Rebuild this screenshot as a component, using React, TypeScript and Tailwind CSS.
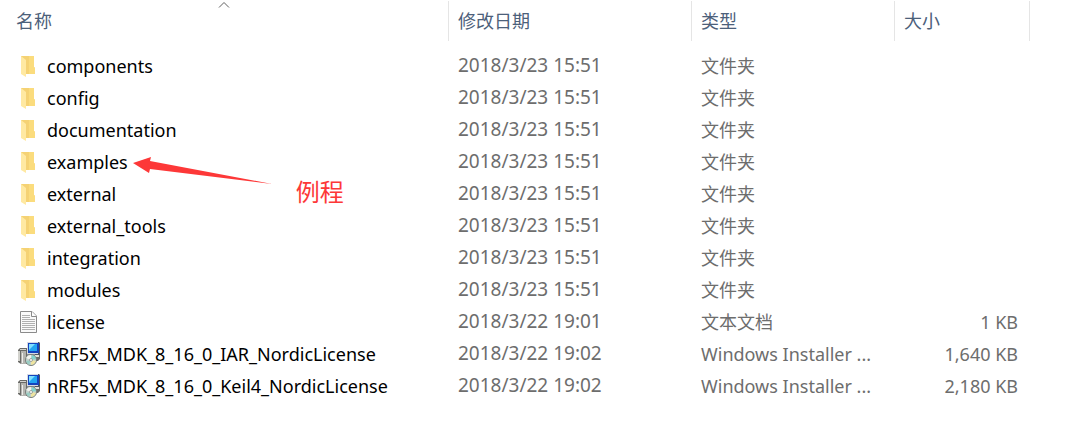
type Kind = "folder" | "text" | "installer";

type Entry = {
  name: string;
  date: string;
  type: string;
  size: string;
  kind: Kind;
  note?: string;
};

const folder = (name: string, note?: string): Entry => ({
  name,
  date: "2018/3/23 15:51",
  type: "文件夹",
  size: "",
  kind: "folder",
  note,
});

const entries: Entry[] = [
  folder("components"),
  folder("config"),
  folder("documentation"),
  folder("examples", "例程"),
  folder("external"),
  folder("external_tools"),
  folder("integration"),
  folder("modules"),
  { name: "license", date: "2018/3/22 19:01", type: "文本文档", size: "1 KB", kind: "text" },
  {
    name: "nRF5x_MDK_8_16_0_IAR_NordicLicense",
    date: "2018/3/22 19:02",
    type: "Windows Installer ...",
    size: "1,640 KB",
    kind: "installer",
  },
  {
    name: "nRF5x_MDK_8_16_0_Keil4_NordicLicense",
    date: "2018/3/22 19:02",
    type: "Windows Installer ...",
    size: "2,180 KB",
    kind: "installer",
  },
];

function FolderIcon() {
  return (
    <svg viewBox="0 0 24 24" className="size-6 shrink-0" aria-hidden="true">
      <path d="M4 2H17V13L18 14V20H8L4 17Z" fill="#f5d274" />
      <path d="M12 2H17V13L18 14V20H12Z" fill="#fbdc7d" />
      <path d="M4 2L9 6V23L4 20Z" fill="#ffe9a2" />
    </svg>
  );
}

function TextIcon() {
  return (
    <svg viewBox="0 0 24 24" className="size-6 shrink-0" aria-hidden="true">
      <path d="M3.5 1.5H15L19.5 6V22.5H3.5Z" fill="#fafafa" stroke="#8b8b8b" />
      <path d="M14.5 1.5V6.5H19.5" fill="#fff" stroke="#8b8b8b" />
      <path
        d="M5 5.5H13M5 7.5H13M5 9.5H18M5 11.5H18M5 13.5H18M5 15.5H18M5 17.5H18M5 19.5H18"
        stroke="#b0b0b0"
      />
    </svg>
  );
}

function InstallerIcon() {
  return (
    <svg viewBox="0 0 24 24" className="size-6 shrink-0" aria-hidden="true">
      <path d="M19 12H23V17L21 19H17Z" fill="#6d6d6a" />
      <path d="M17 13H22V15H17Z" fill="#e2e2d8" />
      <path d="M1 8L3 6H10V22H4L1 20Z" fill="#6a6a67" />
      <path d="M4 9H9V22H4Z" fill="#b4b4af" />
      <path d="M1 9H3V19H1Z" fill="#d3d3ce" />
      <path d="M3 7H9V8H3Z" fill="#d3d3ce" />
      <path d="M5 11H6V21H5Z" fill="#ededea" />
      <path d="M10 0H22L23 1V12L22 13H10Z" fill="#4c5263" />
      <path d="M10 0H21V12H10Z" fill="#d5dae3" />
      <path d="M11 1H22V11H11Z" fill="#1544bd" />
      <path d="M12 2H20V9H12Z" fill="#22a6f2" />
      <path d="M12 2H18L12 8Z" fill="#80dfff" />
      <path d="M10 12H18V14H10Z" fill="#8b8e92" />
      <circle cx="14" cy="18" r="5.5" fill="#c4d2ce" stroke="#777d78" />
      <path d="M14 18L9 16L11 13.5L14 13Z" fill="#f2f4ef" />
      <path d="M14 18L15 13L18 14.5L19 17Z" fill="#83d5ce" />
      <path d="M14 18L19 19L17 22L14 23Z" fill="#efe5a0" />
      <path d="M14 18L9 19L10 21L12 23Z" fill="#99cec4" />
      <circle cx="14" cy="18" r="1.5" fill="#fff" stroke="#8b918b" strokeWidth=".8" />
    </svg>
  );
}

function EntryIcon({ kind }: { kind: Kind }) {
  if (kind === "folder") return <FolderIcon />;
  if (kind === "text") return <TextIcon />;
  return <InstallerIcon />;
}

function Note({ text }: { text: string }) {
  return (
    <span className="absolute left-full top-0 ml-1 flex items-start">
      <svg viewBox="0 0 140 32" className="mt-1 h-8 w-[140px] shrink-0" aria-hidden="true">
        <path d="M1 11L19 5L18 9L140 32L18 17L17 21Z" fill="#fd3838" />
      </svg>
      <span className="ml-6 mt-7 whitespace-nowrap text-2xl text-[#fd3838]">{text}</span>
    </span>
  );
}

const headCell = "h-10 border-r border-[#e5e5e5] p-0 pl-[9px] text-left font-normal";

export default function App() {
  return (
    <main className="min-h-screen bg-white pr-[53px] pt-px font-['Noto_Sans','Noto_Sans_CJK_SC',sans-serif] text-lg">
      <table className="w-full table-fixed border-separate border-spacing-0 text-[#6d6d6d]">
        <colgroup>
          <col />
          <col className="w-[243px]" />
          <col className="w-[203px]" />
          <col className="w-[135px]" />
        </colgroup>
        <thead className="text-[#4c607a]">
          <tr>
            <th scope="col" aria-sort="ascending" className="relative h-10 border-r border-[#e5e5e5] p-0 pl-4 text-left font-normal">
              名称
              <svg viewBox="0 0 12 7" className="absolute inset-x-0 top-0 mx-auto h-[7px] w-3" fill="none" stroke="#606060" aria-hidden="true">
                <path d="M1 6.5L6 1.5L11 6.5" />
              </svg>
            </th>
            <th scope="col" className={headCell}>修改日期</th>
            <th scope="col" className={headCell}>类型</th>
            <th scope="col" className={headCell}>大小</th>
          </tr>
        </thead>
        <tbody className="before:block before:h-[9px]">
          {entries.map((entry) => (
            <tr key={entry.name}>
              <td className="h-8 p-0 pl-[17px]">
                <div className="flex items-center gap-1.5 text-black">
                  <EntryIcon kind={entry.kind} />
                  <span className="relative whitespace-nowrap">
                    {entry.name}
                    {entry.note && <Note text={entry.note} />}
                  </span>
                </div>
              </td>
              <td className="h-8 p-0 pl-[9px] text-[19px]">{entry.date}</td>
              <td className="h-8 whitespace-nowrap p-0 pl-[9px]">{entry.type}</td>
              <td className="h-8 p-0 pr-3 text-right">{entry.size}</td>
            </tr>
          ))}
        </tbody>
      </table>
    </main>
  );
}
